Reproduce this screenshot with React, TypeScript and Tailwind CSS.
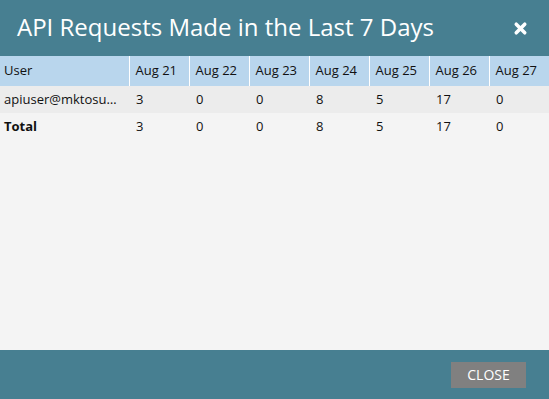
import { X } from "lucide-react";

const days = ["Aug 21", "Aug 22", "Aug 23", "Aug 24", "Aug 25", "Aug 26", "Aug 27"];

const rows = [
  { user: "apiuser@mktosu…", counts: [3, 0, 0, 8, 5, 17, 0], bold: false, bg: "bg-[#ececec]" },
  { user: "Total", counts: [3, 0, 0, 8, 5, 17, 0], bold: true, bg: "bg-[#f4f4f4]" },
];

export default function App() {
  return (
    <div className="w-[549px] h-[399px] flex flex-col bg-[#f4f4f4] font-['Open_Sans',sans-serif] overflow-hidden">
      {/* Header */}
      <div className="h-[56px] shrink-0 bg-[#477f91] flex items-center justify-between pl-[17px] pr-[20px]">
        <h1 className="text-[24px] text-white leading-none pb-[2px]">API Requests Made in the Last 7 Days</h1>
        <X className="w-[17px] h-[17px] text-white" strokeWidth={5} />
      </div>

      {/* Table */}
      <div className="flex-1">
        <table className="w-full border-collapse text-[13px] text-[#111] table-fixed">
          <colgroup>
            <col className="w-[129px]" />
            {days.map((d) => (
              <col key={d} className="w-[60px]" />
            ))}
          </colgroup>
          <thead>
            <tr className="bg-[#b9d6ed] h-[30px]">
              <th className="text-left font-normal px-[4px]">User</th>
              {days.map((d) => (
                <th key={d} className="text-left font-normal px-[6px] border-l border-white">
                  {d}
                </th>
              ))}
            </tr>
          </thead>
          <tbody>
            {rows.map((r) => (
              <tr key={r.user} className={`${r.bg} h-[27px]`}>
                <td className={`px-[4px] whitespace-nowrap ${r.bold ? "font-bold" : ""}`}>
                  {r.user}
                </td>
                {r.counts.map((c, i) => (
                  <td key={i} className="px-[7px]">
                    {c}
                  </td>
                ))}
              </tr>
            ))}
          </tbody>
        </table>
      </div>

      {/* Footer */}
      <div className="h-[49px] shrink-0 bg-[#477f91] flex items-center justify-end pr-[23px]">
        <button className="w-[75px] h-[26px] bg-[#808080] text-white text-[14px] leading-none">
          CLOSE
        </button>
      </div>
    </div>
  );
}
